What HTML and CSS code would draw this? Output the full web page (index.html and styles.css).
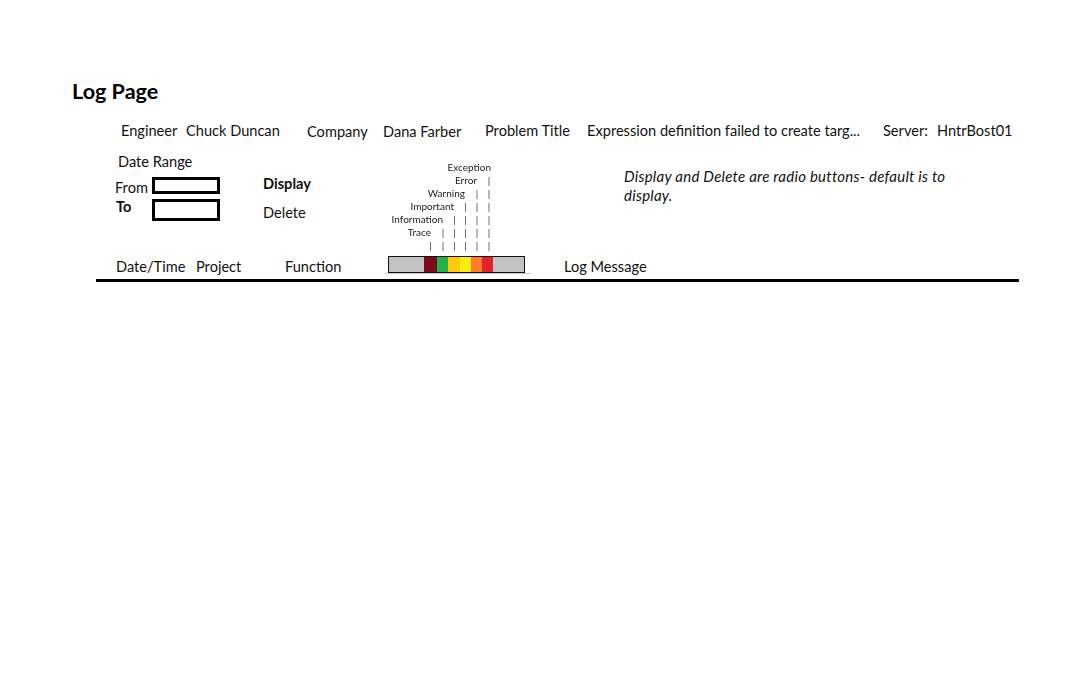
FILE: index.html
```html
<!DOCTYPE html>
<html lang="en">
<head>
<meta charset="utf-8">
<title>Log Page</title>
<link rel="stylesheet" href="styles.css">
</head>
<body>
<div class="page">
  <h1 class="title">Log Page</h1>

  <div class="info">
    <span>Engineer</span>
    <span>Chuck Duncan</span>
    <span class="low">Company</span>
    <span class="low">Dana Farber</span>
    <span>Problem Title</span>
    <span>Expression definition failed to create targ...</span>
    <span>Server:</span>
    <span>HntrBost01</span>
  </div>

  <div class="controls">
    <div class="daterange">
      <div class="dr-title">Date Range</div>
      <div class="dr-row dr-from">
        <span class="dr-label">From</span>
        <span class="dr-box"></span>
      </div>
      <div class="dr-row dr-to">
        <span class="dr-label strong">To</span>
        <span class="dr-box"></span>
      </div>
    </div>

    <div class="radios">
      <div class="radio radio-display">Display</div>
      <div class="radio radio-delete">Delete</div>
    </div>

    <div class="levels">
      <div class="lv-row"><span class="lv-label lv-last">Exception</span></div>
      <div class="lv-row"><span class="lv-label">Error</span><span class="tick">|</span></div>
      <div class="lv-row"><span class="lv-label">Warning</span><span class="tick">|</span><span class="tick">|</span></div>
      <div class="lv-row"><span class="lv-label">Important</span><span class="tick">|</span><span class="tick">|</span><span class="tick">|</span></div>
      <div class="lv-row"><span class="lv-label">Information</span><span class="tick">|</span><span class="tick">|</span><span class="tick">|</span><span class="tick">|</span></div>
      <div class="lv-row"><span class="lv-label">Trace</span><span class="tick">|</span><span class="tick">|</span><span class="tick">|</span><span class="tick">|</span><span class="tick">|</span></div>
      <div class="lv-row"><span class="tick">|</span><span class="tick">|</span><span class="tick">|</span><span class="tick">|</span><span class="tick">|</span><span class="tick">|</span></div>
    </div>

    <p class="note">Display and Delete are radio buttons- default is to display.</p>
  </div>

  <div class="columns">
    <span class="col col-date">Date/Time</span>
    <span class="col col-project">Project</span>
    <span class="col col-function">Function</span>
    <div class="levelbar">
      <div class="bar">
        <span class="seg seg-gray-l"></span>
        <span class="seg seg-darkred"></span>
        <span class="seg seg-green"></span>
        <span class="seg seg-gold"></span>
        <span class="seg seg-yellow"></span>
        <span class="seg seg-orange"></span>
        <span class="seg seg-red"></span>
        <span class="seg seg-gray-r"></span>
      </div>
    </div>
    <span class="col col-message">Log Message</span>
  </div>

  <div class="rule"></div>
</div>
</body>
</html>
```

FILE: styles.css
```css
* { box-sizing: border-box; }

html, body {
  margin: 0;
  padding: 0;
  background: #ffffff;
}

body {
  font-family: Lato, "Open Sans", "Liberation Sans", sans-serif;
  color: #111111;
  font-size: 14.6px;
  line-height: 18px;
}

.page {
  width: 1079px;
  height: 679px;
  padding-top: 78px;
}

.title {
  margin: 0 0 0 72px;
  font-size: 21.6px;
  line-height: 26px;
  font-weight: 700;
  color: #000;
}

/* top info strip */
.info {
  margin: 18px 0 0 121px;
  display: grid;
  grid-template-columns: 65px 121px 76px 102px 102px 296px 54px auto;
  white-space: nowrap;
}
.info .low { padding-top: 1px; }

/* controls area */
.controls {
  margin: 12px 0 0 115px;
  height: 99px;
  display: flex;
  align-items: flex-start;
}

.daterange {
  width: 148px;
  flex: none;
}
.dr-title {
  margin-left: 3px;
  height: 18px;
}
.dr-row {
  display: flex;
  align-items: flex-start;
}
.dr-from {
  margin-top: 5px;
  height: 19px;
}
.dr-to {
  margin-top: 3px;
  height: 23px;
}
.dr-label {
  width: 37px;
  flex: none;
}
.dr-from .dr-label { padding-top: 3px; }
.dr-to .dr-label { margin-left: 1px; width: 36px; }
.strong { font-weight: 700; }
.dr-box {
  display: block;
  width: 68px;
  border: 3px solid #000;
  margin-top: 1px;
}
.dr-from .dr-box { height: 17px; }
.dr-to .dr-box { height: 22px; }

.radios {
  width: 122px;
  flex: none;
}
.radio-display {
  margin-top: 22px;
  font-weight: 700;
}
.radio-delete {
  margin-top: 11px;
}

/* level legend */
.levels {
  width: 110px;
  flex: none;
  margin-top: 8px;
  font-size: 10px;
  line-height: 13px;
  color: #222;
  will-change: transform;
}
.lv-row {
  height: 13px;
  display: flex;
  justify-content: flex-end;
  white-space: nowrap;
}
.lv-label { margin-right: 6px; }
.lv-label.lv-last { margin-right: 4px; }
.tick {
  width: 12px;
  text-align: center;
  flex: none;
  color: #333;
}
.tick:nth-last-child(3),
.tick:nth-last-child(4) { width: 11px; }
.tick:nth-last-child(6) { width: 13px; }

.note {
  margin: 14px 0 0 129px;
  width: 345px;
  font-size: 15px;
  letter-spacing: 0.25px;
  font-style: italic;
  line-height: 19px;
}

/* column header row */
.columns {
  margin: 4px 0 0 116px;
  display: flex;
  align-items: flex-start;
  height: 18px;
}
.col {
  flex: none;
  padding-top: 2px;
  white-space: nowrap;
}
.col-date { width: 80px; }
.col-project { width: 89px; }
.col-function { width: 103px; }
.col-message { margin-left: 39px; }

.levelbar {
  width: 137px;
  flex: none;
  position: relative;
}
.levelbar::after {
  content: "";
  position: absolute;
  left: -3px;
  right: -5px;
  top: 17px;
  height: 1px;
  background: #c8c8c8;
}
.bar {
  display: flex;
  height: 17px;
  border: 1px solid #111;
  background: #c3c3c3;
}
.seg { display: block; height: 100%; flex: none; }
.seg-gray-l { width: 35px; background: #c3c3c3; }
.seg-darkred { width: 13px; background: #7c0a1a; }
.seg-green { width: 11px; background: #22b14c; }
.seg-gold { width: 12px; background: #ffc90e; }
.seg-yellow { width: 11px; background: #f8ec10; }
.seg-orange { width: 11px; background: #ff7f27; }
.seg-red { width: 11px; background: #e4212c; }
.seg-gray-r { flex: 1; background: #c3c3c3; }

.rule {
  margin: 5px 0 0 96px;
  width: 923px;
  height: 3px;
  background: #000;
}
```
